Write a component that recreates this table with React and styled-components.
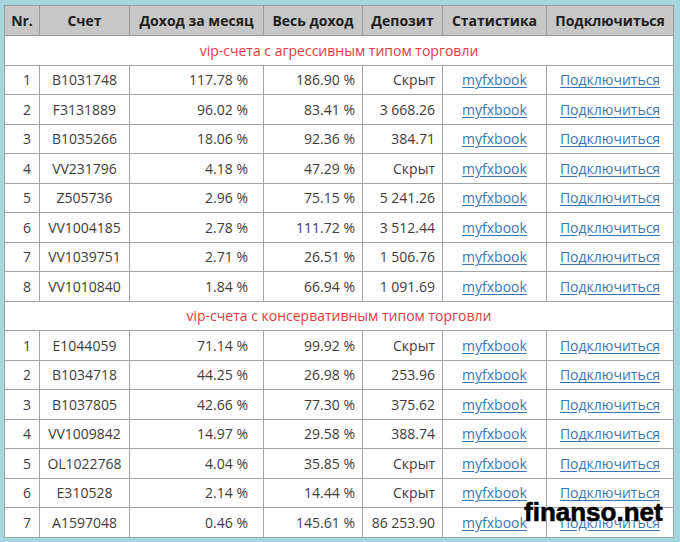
import styled, { createGlobalStyle } from 'styled-components'

const GlobalStyle = createGlobalStyle`
  html, body {
    margin: 0;
    padding: 0;
    background: #a6d6df;
  }
  body {
    font-family: "Open Sans", "Liberation Sans", sans-serif;
  }
`

const Frame = styled.div`
  position: relative;
  width: 680px;
  height: 542px;
  padding: 5px 7px 0 4px;
  box-sizing: border-box;
  background: #a6d6df;
`

const Table = styled.table`
  width: 669px;
  border-collapse: collapse;
  background: #fff;
  table-layout: fixed;
  font-size: 14px;
  color: #3d3d3d;
  border: 1px solid #a0a0a0;
`

const Col = styled.col`
  width: ${p => p.w}px;
`

const Head = styled.th`
  background: #c7c7c7;
  color: #1e1e1e;
  font-weight: 700;
  height: 29px;
  padding: 0;
  text-align: center;
  border: 1px solid #9c9c9c;
`

const Row = styled.tr`
  height: 29.5px;
`

const Cell = styled.td`
  border: 1px solid #a3a3a3;
  padding: 0 ${p => p.pr || 0}px 0 0;
  text-align: ${p => p.align || 'center'};
  white-space: nowrap;
`

const GroupCell = styled.td`
  color: #e23a45;
  text-align: center;
  border-top: 1px solid #a3a3a3;
  border-bottom: 1px solid #a3a3a3;
`

const Link = styled.a`
  color: #3a77b5;
  text-decoration: underline;
  text-underline-offset: 2px;
`

const Watermark = styled.div`
  position: absolute;
  left: 524px;
  top: 497px;
  font-family: "Liberation Sans", Arial, sans-serif;
  font-weight: 700;
  font-size: 26px;
  line-height: 30px;
  color: #000;
  -webkit-text-stroke: 0.6px #000;
  text-shadow: 0 0 2px #fff, 0 0 2px #fff;
`

const columns = [
  { title: 'Nr.', w: 35 },
  { title: 'Счет', w: 90 },
  { title: 'Доход за месяц', w: 134 },
  { title: 'Весь доход', w: 99 },
  { title: 'Депозит', w: 80 },
  { title: 'Статистика', w: 104 },
  { title: 'Подключиться', w: 127 },
]

const aggressive = [
  ['B1031748', '117.78 %', '186.90 %', 'Скрыт'],
  ['F3131889', '96.02 %', '83.41 %', '3 668.26'],
  ['B1035266', '18.06 %', '92.36 %', '384.71'],
  ['VV231796', '4.18 %', '47.29 %', 'Скрыт'],
  ['Z505736', '2.96 %', '75.15 %', '5 241.26'],
  ['VV1004185', '2.78 %', '111.72 %', '3 512.44'],
  ['VV1039751', '2.71 %', '26.51 %', '1 506.76'],
  ['VV1010840', '1.84 %', '66.94 %', '1 091.69'],
]

const conservative = [
  ['E1044059', '71.14 %', '99.92 %', 'Скрыт'],
  ['B1034718', '44.25 %', '26.98 %', '253.96'],
  ['B1037805', '42.66 %', '77.30 %', '375.62'],
  ['VV1009842', '14.97 %', '29.58 %', '388.74'],
  ['OL1022768', '4.04 %', '35.85 %', 'Скрыт'],
  ['E310528', '2.14 %', '14.44 %', 'Скрыт'],
  ['A1597048', '0.46 %', '145.61 %', '86 253.90'],
]

function Group({ title, rows }) {
  return (
    <>
      <Row>
        <GroupCell colSpan={7}>{title}</GroupCell>
      </Row>
      {rows.map((r, i) => (
        <Row key={r[0]}>
          <Cell align="right" pr={8}>{i + 1}</Cell>
          <Cell>{r[0]}</Cell>
          <Cell align="right" pr={15}>{r[1]}</Cell>
          <Cell align="right" pr={7}>{r[2]}</Cell>
          <Cell align="right" pr={7}>{r[3]}</Cell>
          <Cell><Link href="#">myfxbook</Link></Cell>
          <Cell><Link href="#">Подключиться</Link></Cell>
        </Row>
      ))}
    </>
  )
}

export default function App() {
  return (
    <Frame>
      <GlobalStyle />
      <Table>
        <colgroup>
          {columns.map(c => (
            <Col key={c.title} w={c.w} />
          ))}
        </colgroup>
        <thead>
          <tr>
            {columns.map(c => (
              <Head key={c.title}>{c.title}</Head>
            ))}
          </tr>
        </thead>
        <tbody>
          <Group title="vip-счета с агрессивным типом торговли" rows={aggressive} />
          <Group title="vip-счета с консервативным типом торговли" rows={conservative} />
        </tbody>
      </Table>
      <Watermark>finanso.net</Watermark>
    </Frame>
  )
}
